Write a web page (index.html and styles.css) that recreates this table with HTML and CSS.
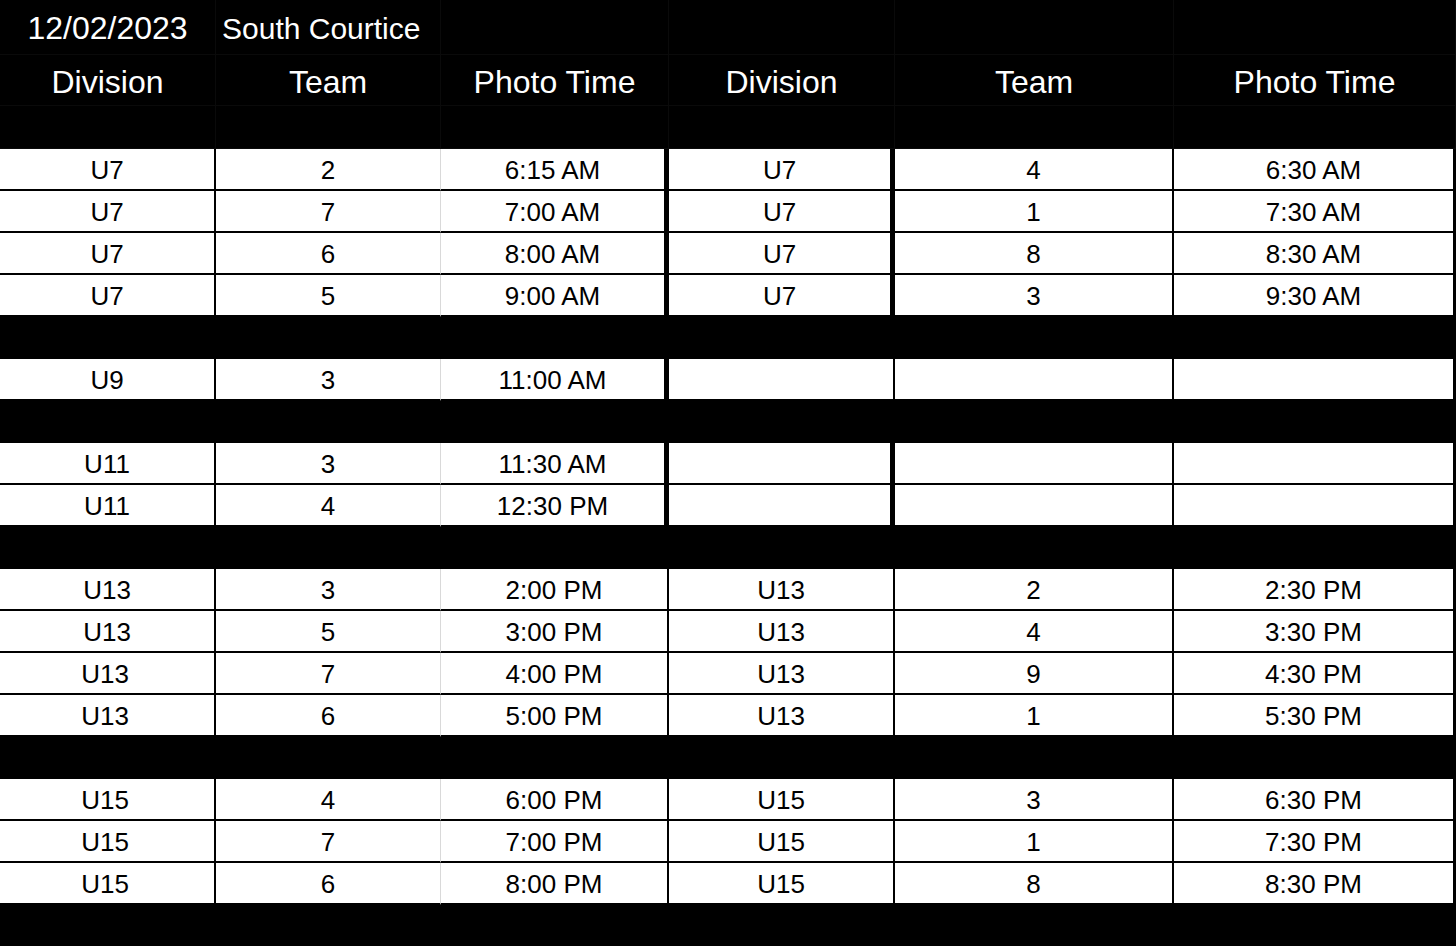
FILE: index.html
```html
<!DOCTYPE html>
<html lang="en">
<head>
<meta charset="utf-8">
<title>Photo Schedule</title>
<link rel="stylesheet" href="styles.css">
</head>
<body>
<div class="sheet">
  <div class="h r1 c1">12/02/2023</div>
  <div class="h r1 c2 left site">South Courtice</div>
  <div class="h r1 c3"></div>
  <div class="h r1 c4"></div>
  <div class="h r1 c5"></div>
  <div class="h r1 c6"></div>

  <div class="h r2 c1">Division</div>
  <div class="h r2 c2">Team</div>
  <div class="h r2 c3">Photo Time</div>
  <div class="h r2 c4">Division</div>
  <div class="h r2 c5">Team</div>
  <div class="h r2 c6">Photo Time</div>

  <div class="h c1"></div>
  <div class="h c2"></div>
  <div class="h c3"></div>
  <div class="h c4"></div>
  <div class="h c5"></div>
  <div class="h c6"></div>

  <div class="c c1">U7</div><div class="c c2">2</div><div class="c c3">6:15 AM</div><div class="c c4">U7</div><div class="c c5">4</div><div class="c c6">6:30 AM</div>
  <div class="c c1">U7</div><div class="c c2">7</div><div class="c c3">7:00 AM</div><div class="c c4">U7</div><div class="c c5">1</div><div class="c c6">7:30 AM</div>
  <div class="c c1">U7</div><div class="c c2">6</div><div class="c c3">8:00 AM</div><div class="c c4">U7</div><div class="c c5">8</div><div class="c c6">8:30 AM</div>
  <div class="c c1">U7</div><div class="c c2">5</div><div class="c c3">9:00 AM</div><div class="c c4">U7</div><div class="c c5">3</div><div class="c c6">9:30 AM</div>

  <div class="band"></div>

  <div class="c c1">U9</div><div class="c c2">3</div><div class="c c3">11:00 AM</div><div class="c c4 thin"></div><div class="c c5"></div><div class="c c6"></div>

  <div class="band"></div>

  <div class="c c1">U11</div><div class="c c2">3</div><div class="c c3">11:30 AM</div><div class="c c4"></div><div class="c c5"></div><div class="c c6"></div>
  <div class="c c1">U11</div><div class="c c2">4</div><div class="c c3">12:30 PM</div><div class="c c4"></div><div class="c c5"></div><div class="c c6"></div>

  <div class="band"></div>

  <div class="c c1">U13</div><div class="c c2">3</div><div class="c c3 thin">2:00 PM</div><div class="c c4 thin">U13</div><div class="c c5">2</div><div class="c c6">2:30 PM</div>
  <div class="c c1">U13</div><div class="c c2">5</div><div class="c c3 thin">3:00 PM</div><div class="c c4 thin">U13</div><div class="c c5">4</div><div class="c c6">3:30 PM</div>
  <div class="c c1 shift">U13</div><div class="c c2">7</div><div class="c c3 thin">4:00 PM</div><div class="c c4 thin">U13</div><div class="c c5">9</div><div class="c c6">4:30 PM</div>
  <div class="c c1 shift">U13</div><div class="c c2">6</div><div class="c c3 thin">5:00 PM</div><div class="c c4 thin">U13</div><div class="c c5">1</div><div class="c c6">5:30 PM</div>

  <div class="band"></div>

  <div class="c c1 shift">U15</div><div class="c c2">4</div><div class="c c3 thin">6:00 PM</div><div class="c c4 thin">U15</div><div class="c c5">3</div><div class="c c6">6:30 PM</div>
  <div class="c c1 shift">U15</div><div class="c c2">7</div><div class="c c3 thin">7:00 PM</div><div class="c c4 thin">U15</div><div class="c c5">1</div><div class="c c6">7:30 PM</div>
  <div class="c c1 shift">U15</div><div class="c c2">6</div><div class="c c3 thin">8:00 PM</div><div class="c c4 thin">U15</div><div class="c c5">8</div><div class="c c6">8:30 PM</div>

  <div class="band"></div>
</div>
</body>
</html>
```

FILE: styles.css
```css
html, body {
  margin: 0;
  padding: 0;
  background: #000;
}

body {
  font-family: "Liberation Sans", Arial, sans-serif;
  color: #000;
  overflow: hidden;
}

.sheet {
  display: grid;
  grid-template-columns: 216px 225px 228px 226px 279px 282px;
  grid-template-rows: 55px 51px 43px;
  grid-auto-rows: 42px;
  width: 1456px;
  height: 947px;
  background: #000;
}

.sheet > div {
  box-sizing: border-box;
  display: flex;
  align-items: center;
  justify-content: center;
  white-space: nowrap;
}

/* header cells */
.h {
  background: #000;
  color: #fff;
  font-size: 32px;
  border-right: 1px solid #0a0a0a;
  border-bottom: 1px solid #0a0a0a;
}

.h.r1 {
  padding-top: 3px;
}

.h.r2 {
  padding-top: 5px;
}

.h.left {
  justify-content: flex-start;
  padding-left: 6px;
}

.h.site {
  font-size: 30px;
}

/* data cells */
.c {
  background: #fff;
  font-size: 26px;
  border-bottom: 2px solid #000;
  padding-top: 2px;
}

.c.c1 { border-right: 2px solid #000; }
.c.c2 { border-right: 1px solid #d9d9d9; }
.c.c3 { border-right: 5px solid #000; }
.c.c4 { border-right: 5px solid #000; }
.c.c5 { border-right: 2px solid #000; }
.c.c6 { border-right: 3px solid #000; }

.c.c3.thin,
.c.c4.thin {
  border-right-width: 2px;
}

.c.shift {
  padding-right: 4px;
}

.band {
  grid-column: 1 / -1;
  background: #000;
}
```
